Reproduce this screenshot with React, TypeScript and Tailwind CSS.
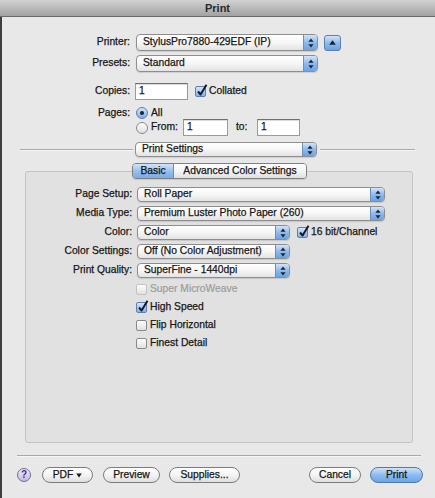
import React from "react";

function UpDown() {
  return (
    <svg width="6" height="10" viewBox="0 0 6 10">
      <path d="M3 0.5 L5.6 3.8 L0.4 3.8 Z" fill="#1b2330" />
      <path d="M3 9.5 L5.6 6.2 L0.4 6.2 Z" fill="#1b2330" />
    </svg>
  );
}

function Popup({ text, className }: { text: string; className: string }) {
  return (
    <div
      className={`flex items-stretch rounded-[4px] border border-[#8e8e8e] bg-gradient-to-b from-[#ffffff] via-[#f6f6f6] to-[#e3e3e3] shadow-[0_1px_1px_rgba(0,0,0,0.12)] ${className}`}
    >
      <span className="flex-1 pl-[6px] flex items-center whitespace-nowrap overflow-hidden">{text}</span>
      <span className="w-[14px] flex items-center justify-center rounded-r-[3px] border-l border-[#6d8fbf] bg-gradient-to-b from-[#d2e4f9] via-[#8fbaec] to-[#6aa2e3]">
        <UpDown />
      </span>
    </div>
  );
}

function Field({ value, className }: { value: string; className: string }) {
  return (
    <div
      className={`flex items-center pl-[3px] bg-white border border-[#9a9a9a] border-t-[#6f6f6f] shadow-[inset_0_1px_1px_rgba(0,0,0,0.15)] ${className}`}
    >
      {value}
    </div>
  );
}

function Check({ checked, disabled }: { checked?: boolean; disabled?: boolean }) {
  if (checked) {
    return (
      <span className="relative block shrink-0 w-[11px] h-[11px] rounded-[2px] border border-[#5d7fae] bg-gradient-to-b from-[#d6e6f8] to-[#86b2e6]">
        <svg className="absolute left-[0px] top-[-3px]" width="12" height="13" viewBox="0 0 12 13">
          <path d="M2 7.5 L4.6 10.5 L10.5 0.8" stroke="#101c33" strokeWidth="2" fill="none" strokeLinejoin="round" />
        </svg>
      </span>
    );
  }
  return (
    <span
      className={`block shrink-0 w-[11px] h-[11px] rounded-[2px] border bg-gradient-to-b from-white to-[#e0e0e0] ${
        disabled ? "border-[#c2c2c2]" : "border-[#8a8a8a]"
      }`}
    />
  );
}

function Radio({ on }: { on?: boolean }) {
  if (on) {
    return (
      <span className="shrink-0 w-[12px] h-[12px] rounded-full border border-[#5d7fae] bg-gradient-to-b from-[#d6e6f8] to-[#7fade6] flex items-center justify-center">
        <span className="w-[4px] h-[4px] rounded-full bg-[#15203a]" />
      </span>
    );
  }
  return <span className="block shrink-0 w-[12px] h-[12px] rounded-full border border-[#8a8a8a] bg-gradient-to-b from-white to-[#e0e0e0]" />;
}

function Btn({ children, className, primary }: { children: React.ReactNode; className: string; primary?: boolean }) {
  return (
    <div
      className={`h-[16px] rounded-full border flex items-center justify-center ${
        primary
          ? "border-[#5677a8] bg-gradient-to-b from-[#cfe3fa] via-[#8dbbef] to-[#6aa5ea]"
          : "border-[#7c7c7c] bg-gradient-to-b from-[#ffffff] via-[#f4f4f4] to-[#dedede]"
      } ${className}`}
    >
      {children}
    </div>
  );
}

export default function App() {
  return (
    <div className="w-[435px] h-[498px] overflow-hidden bg-[#e8e8e8] text-[10.3px] leading-none text-[#161616] [-webkit-text-stroke:0.25px_#161616] font-['Liberation_Sans',Arial,sans-serif] flex flex-col">
      {/* title bar */}
      <div className="h-[17px] shrink-0 border-b border-[#6a6a6a] bg-gradient-to-b from-[#d2d2d2] to-[#a2a2a2] flex items-center justify-center text-[11px] font-bold text-[#2a2a2a] [-webkit-text-stroke:0px]">
        Print
      </div>
      <div className="flex flex-1">
        <div className="w-[2px] bg-[#3e3e3e]" />
        <div className="flex-1 flex flex-col">
          {/* Printer */}
          <div className="mt-[17px] h-[17px] flex items-center">
            <span className="w-[128px] text-right">Printer:</span>
            <Popup text="StylusPro7880-429EDF (IP)" className="ml-[6px] w-[182px] h-[17px]" />
            <div className="ml-[6px] w-[17px] h-[16px] rounded-[3px] border border-[#5d7fae] bg-gradient-to-b from-[#d2e4f9] via-[#8fbaec] to-[#6aa2e3] flex items-center justify-center">
              <svg width="7" height="5" viewBox="0 0 7 5">
                <path d="M3.5 0.3 L6.8 4.7 L0.2 4.7 Z" fill="#1b2330" />
              </svg>
            </div>
          </div>
          {/* Presets */}
          <div className="mt-[4px] h-[17px] flex items-center">
            <span className="w-[128px] text-right">Presets:</span>
            <Popup text="Standard" className="ml-[6px] w-[182px] h-[17px]" />
          </div>
          {/* Copies */}
          <div className="mt-[11px] h-[17px] flex items-center">
            <span className="w-[128px] text-right">Copies:</span>
            <Field value="1" className="ml-[5px] w-[53px] h-[17px]" />
            <span className="ml-[7px]">
              <Check checked />
            </span>
            <span className="ml-[3px]">Collated</span>
          </div>
          {/* Pages */}
          <div className="mt-[7px] h-[12px] flex items-center">
            <span className="w-[128px] text-right">Pages:</span>
            <span className="ml-[6px]">
              <Radio on />
            </span>
            <span className="ml-[3px]">All</span>
          </div>
          <div className="h-[17px] flex items-center">
            <span className="w-[128px]" />
            <span className="ml-[6px] w-[47px] flex items-center">
              <Radio />
              <span className="ml-[3px]">From:</span>
            </span>
            <Field value="1" className="w-[45px] h-[17px]" />
            <span className="ml-[8px] w-[21px]">to:</span>
            <Field value="1" className="w-[43px] h-[17px]" />
          </div>
          {/* Print Settings */}
          <div className="mt-[6px] h-[15px] flex items-center">
            <div className="ml-[18px] w-[113px] h-[2px] border-t border-[#a9a9a9] border-b border-b-[#f6f6f6]" />
            <Popup text="Print Settings" className="ml-[2px] w-[182px] h-[15px]" />
            <div className="ml-[3px] w-[95px] h-[2px] border-t border-[#a9a9a9] border-b border-b-[#f6f6f6]" />
          </div>
          {/* Tabs */}
          <div className="mt-[6px] h-[16px] flex relative z-10">
            <div className="ml-[130px] flex h-[16px] rounded-[4px] border border-[#808080] overflow-hidden shadow-[0_1px_1px_rgba(0,0,0,0.12)]">
              <div className="w-[41px] flex items-center justify-center bg-gradient-to-b from-[#d2e4f9] via-[#98c0ee] to-[#77abe8] border-r border-[#7a8aa0]">
                Basic
              </div>
              <div className="w-[132px] flex items-center justify-center bg-gradient-to-b from-white via-[#f5f5f5] to-[#e0e0e0]">
                Advanced Color Settings
              </div>
            </div>
          </div>
          {/* Group box */}
          <div className="-mt-[8px] ml-[23px] w-[388px] h-[272px] rounded-[3px] border border-[#c4c4c4] bg-[#e1e1e1] pt-[15px] flex flex-col">
            <div className="flex flex-col gap-[4px]">
              <div className="h-[15px] flex items-center">
                <span className="w-[106px] text-right">Page Setup:</span>
                <Popup text="Roll Paper" className="ml-[5px] w-[248px] h-[15px]" />
              </div>
              <div className="h-[15px] flex items-center">
                <span className="w-[106px] text-right">Media Type:</span>
                <Popup text="Premium Luster Photo Paper (260)" className="ml-[5px] w-[248px] h-[15px]" />
              </div>
              <div className="h-[15px] flex items-center">
                <span className="w-[106px] text-right">Color:</span>
                <Popup text="Color" className="ml-[5px] w-[153px] h-[15px]" />
                <span className="ml-[7px]">
                  <Check checked />
                </span>
                <span className="ml-[3px]">16 bit/Channel</span>
              </div>
              <div className="h-[15px] flex items-center">
                <span className="w-[106px] text-right">Color Settings:</span>
                <Popup text="Off (No Color Adjustment)" className="ml-[5px] w-[153px] h-[15px]" />
              </div>
              <div className="h-[15px] flex items-center">
                <span className="w-[106px] text-right">Print Quality:</span>
                <Popup text="SuperFine - 1440dpi" className="ml-[5px] w-[153px] h-[15px]" />
              </div>
            </div>
            <div className="mt-[2px] flex flex-col">
              <div className="h-[18px] flex items-center pl-[110px]">
                <Check disabled />
                <span className="ml-[3px] text-[#9c9c9c] [-webkit-text-stroke:0.2px_#9c9c9c]">Super MicroWeave</span>
              </div>
              <div className="h-[18px] flex items-center pl-[110px]">
                <Check checked />
                <span className="ml-[3px]">High Speed</span>
              </div>
              <div className="h-[18px] flex items-center pl-[110px]">
                <Check />
                <span className="ml-[3px]">Flip Horizontal</span>
              </div>
              <div className="h-[18px] flex items-center pl-[110px]">
                <Check />
                <span className="ml-[3px]">Finest Detail</span>
              </div>
            </div>
          </div>
          {/* separator */}
          <div className="mt-[12px] ml-[15px] w-[404px] h-[2px] border-t border-[#a9a9a9] border-b border-b-[#f6f6f6]" />
          {/* buttons */}
          <div className="mt-[10px] h-[16px] flex items-center">
            <div className="ml-[15px] w-[14px] h-[14px] rounded-full border border-[#6e6e8a] bg-gradient-to-b from-[#f4efff] to-[#c4b5e6] flex items-center justify-center text-[10px] font-bold text-[#4b2a86] [-webkit-text-stroke:0px]">
              ?
            </div>
            <Btn className="ml-[11px] w-[51px]">
              <span>PDF</span>
              <svg className="ml-[3px]" width="6" height="5" viewBox="0 0 6 5">
                <path d="M0.2 0.5 L5.8 0.5 L3 4.6 Z" fill="#1a1a1a" />
              </svg>
            </Btn>
            <Btn className="ml-[10px] w-[57px]">Preview</Btn>
            <Btn className="ml-[9px] w-[71px]">Supplies...</Btn>
            <Btn className="ml-auto w-[52px]">Cancel</Btn>
            <Btn primary className="ml-[9px] mr-[12px] w-[53px]">
              Print
            </Btn>
          </div>
        </div>
      </div>
    </div>
  );
}
